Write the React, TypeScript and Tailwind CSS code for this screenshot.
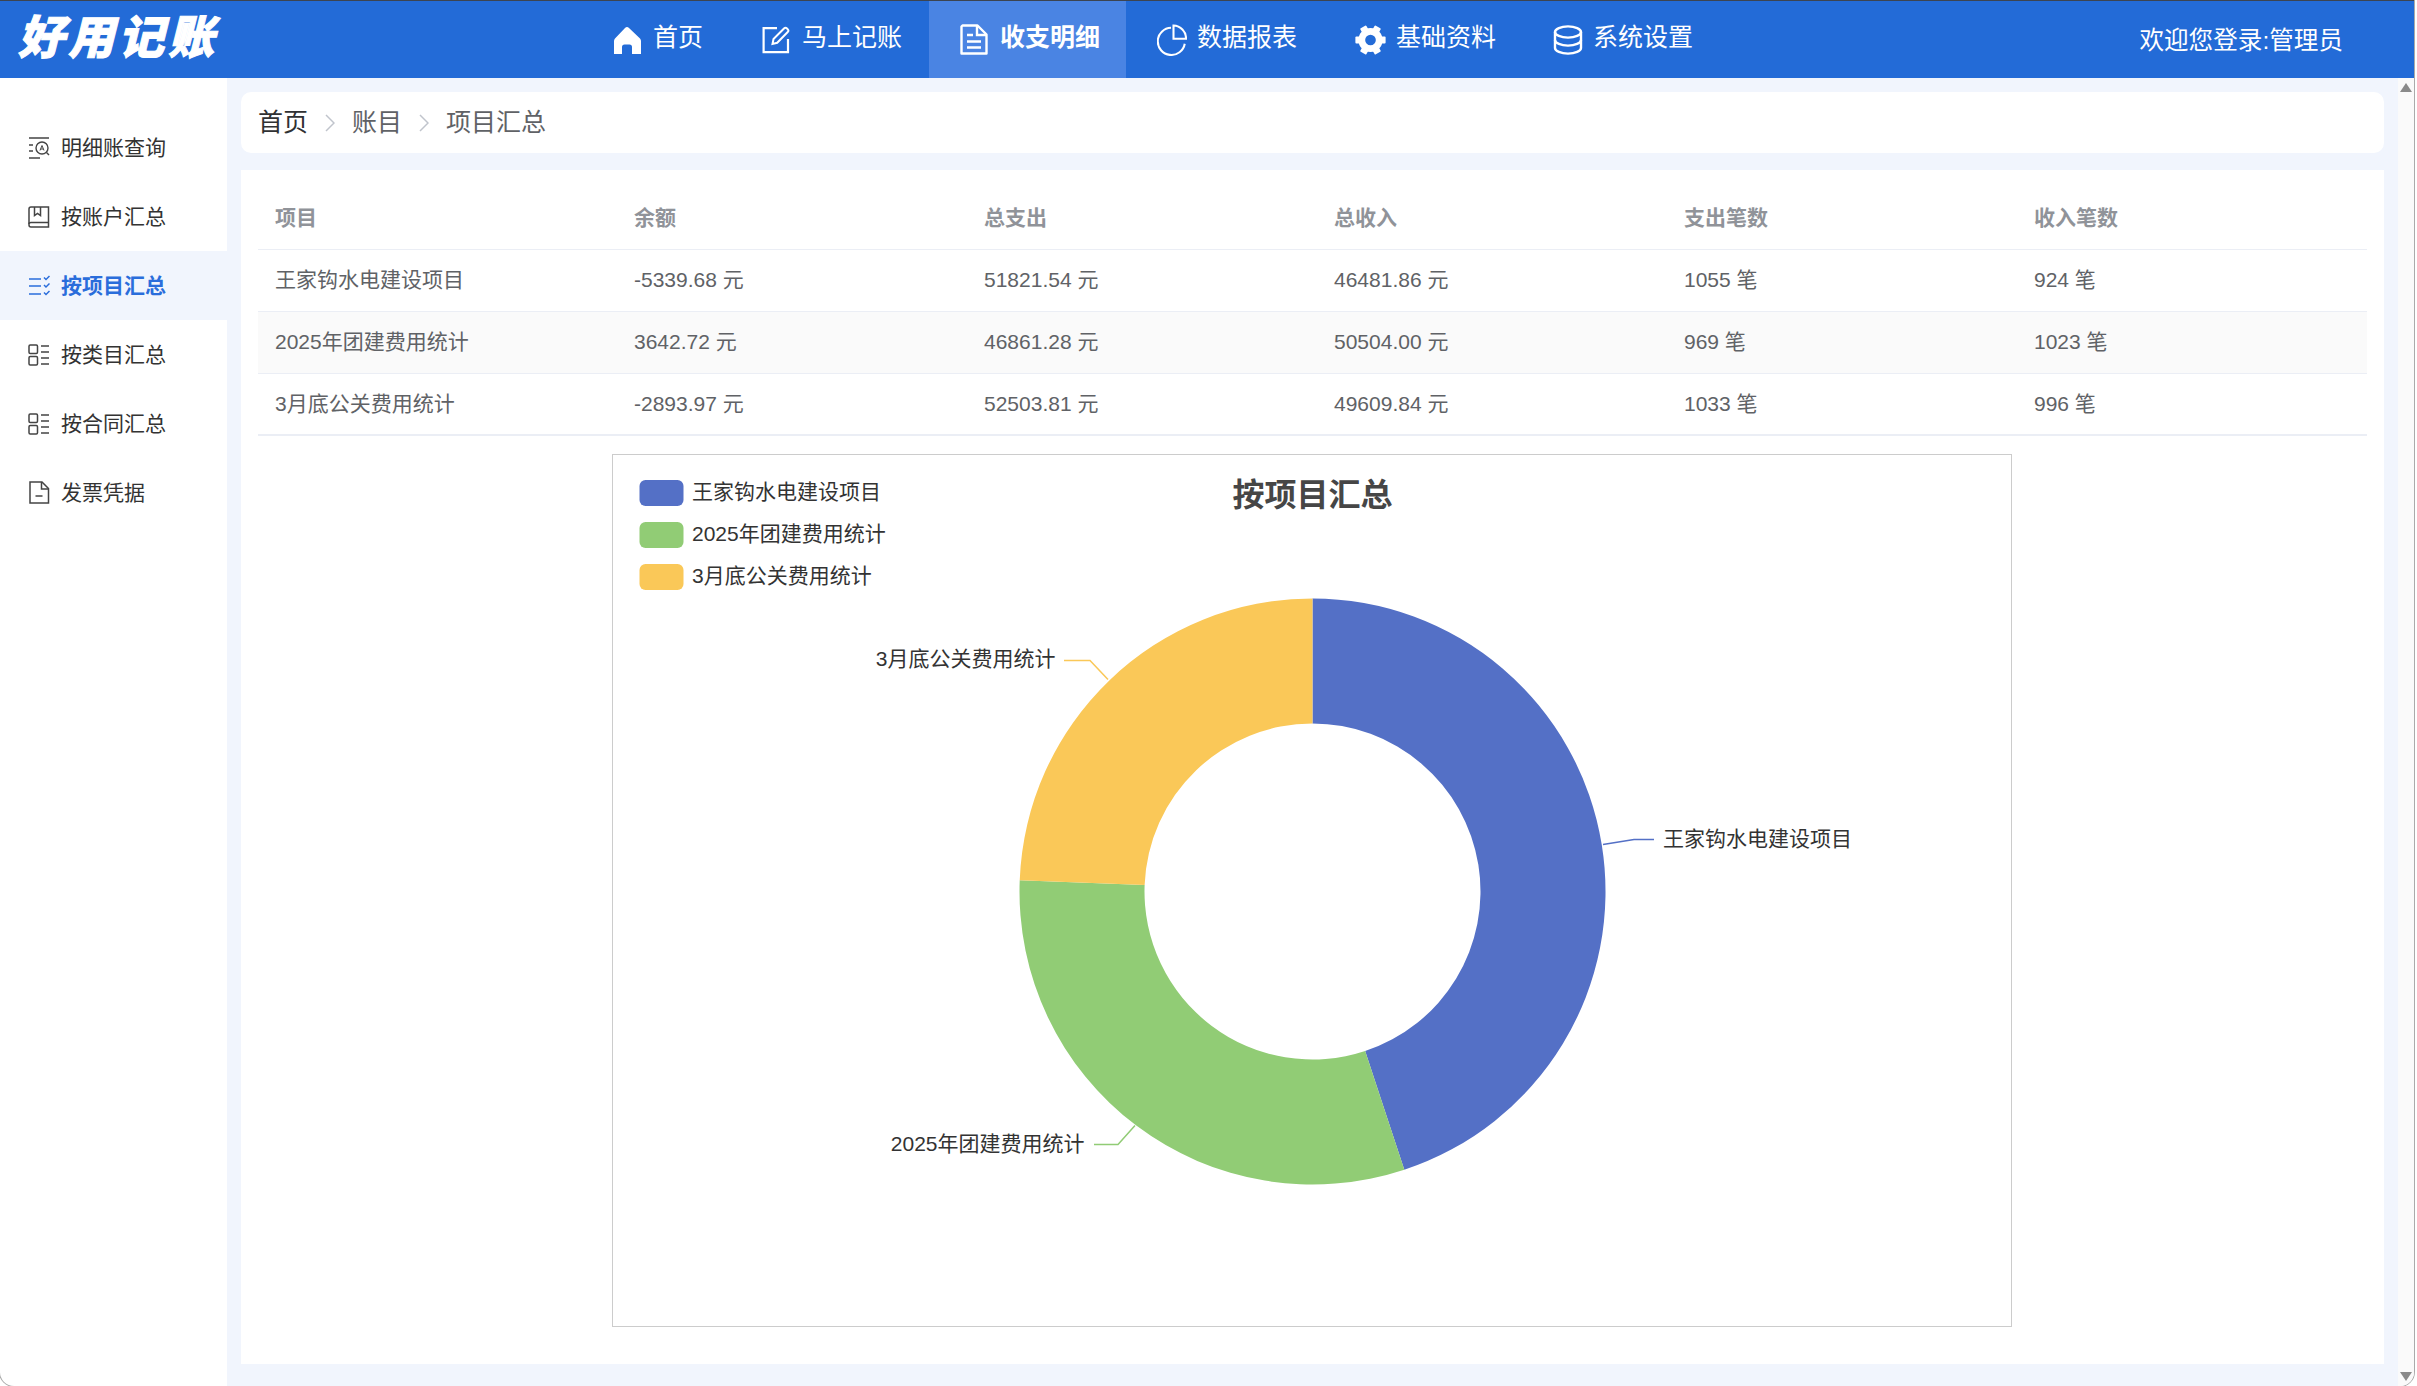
import type { ReactNode } from 'react';

const FONT = '"Liberation Sans", "Noto Sans CJK SC", sans-serif';

const CX = 699.5;
const CY = 436.5;
const R_OUT = 293;
const R_IN = 168;

// Clockwise degrees from 12 o'clock, read off the reference
const SLICES = [
  { from: 0, to: 161.74, color: '#5470c6' },
  { from: 161.74, to: 272.2, color: '#91cc75' },
  { from: 272.2, to: 360, color: '#fac858' },
];

const LEGEND = [
  { name: '王家钩水电建设项目', color: '#5470c6' },
  { name: '2025年团建费用统计', color: '#91cc75' },
  { name: '3月底公关费用统计', color: '#fac858' },
];

const ROWS = [
  ['王家钩水电建设项目', '-5339.68 元', '51821.54 元', '46481.86 元', '1055 笔', '924 笔'],
  ['2025年团建费用统计', '3642.72 元', '46861.28 元', '50504.00 元', '969 笔', '1023 笔'],
  ['3月底公关费用统计', '-2893.97 元', '52503.81 元', '49609.84 元', '1033 笔', '996 笔'],
];

const HEADS = ['项目', '余额', '总支出', '总收入', '支出笔数', '收入笔数'];

function point(deg: number, r: number) {
  const a = (deg * Math.PI) / 180;
  return `${(CX + r * Math.sin(a)).toFixed(2)} ${(CY - r * Math.cos(a)).toFixed(2)}`;
}

function arcPath(from: number, to: number) {
  const large = to - from > 180 ? 1 : 0;
  return `M${point(from, R_OUT)} A${R_OUT} ${R_OUT} 0 ${large} 1 ${point(to, R_OUT)} L${point(to, R_IN)} A${R_IN} ${R_IN} 0 ${large} 0 ${point(from, R_IN)} Z`;
}

function HomeIcon() {
  return (
    <svg width="28" height="28" viewBox="0 0 28 28" fill="#fff">
      <path d="M14 1 Q15 1 16 2 L27 12.5 Q28 13.5 28 15 V28 H19 V21 Q19 18.5 16.5 18.5 H11.5 Q9 18.5 9 21 V28 H1 V15 Q1 13.5 2 12.5 L12 2 Q13 1 14 1 Z" />
    </svg>
  );
}

function EditIcon() {
  return (
    <svg width="28" height="28" viewBox="0 0 28 28" fill="none" stroke="#fff" strokeWidth="2.2">
      <path d="M15 2.2 H1.6 V26.2 H26 V13" />
      <path d="M10.5 18 L11.5 13 L22 2.5 Q23.5 1 25 2.5 L25.8 3.3 Q27 4.8 25.7 6 L15.2 16.8 Z" strokeWidth="2" />
    </svg>
  );
}

function DocIcon() {
  return (
    <svg width="28" height="31" viewBox="0 0 28 31" fill="none" stroke="#fff" strokeWidth="2.4">
      <path d="M2.5 1.5 H17.5 L26.5 10.5 V29.5 H1.5 V2.5 Z" strokeLinejoin="round" />
      <path d="M17 2 V11 H26" />
      <path d="M7 11 H13 M7 17.5 H21 M7 23.5 H21" />
    </svg>
  );
}

function PieIcon() {
  return (
    <svg width="32" height="33" viewBox="0 0 32 33" fill="none" stroke="#fff" strokeWidth="2.2">
      <path d="M15 4 A14.5 14.5 0 1 0 29.6 21" />
      <path d="M17.6 1.6 V15.6 H31 A14 14 0 0 0 17.6 1.6 Z" />
    </svg>
  );
}

const GEAR_TEETH = [0, 60, 120, 180, 240, 300];

function GearIcon() {
  return (
    <svg width="32" height="30" viewBox="-16 -15 32 30" fill="#fff" className="-ml-[1px]">
      <circle r="9" fill="none" stroke="#fff" strokeWidth="7" />
      {GEAR_TEETH.map((deg) => (
        <rect key={deg} x="10" y="-3.6" width="5.6" height="7.2" rx="1" transform={`rotate(${deg})`} />
      ))}
    </svg>
  );
}

function DbIcon() {
  return (
    <svg width="30" height="30" viewBox="0 0 30 30" fill="none" stroke="#fff" strokeWidth="2.4">
      <ellipse cx="15" cy="7" rx="13" ry="5.6" />
      <path d="M2 7 V23 C2 26 8 28.6 15 28.6 S28 26 28 23 V7" />
      <path d="M2 15 C2 18 8 20.6 15 20.6 S28 18 28 15" />
    </svg>
  );
}

const NAV: { label: string; icon: ReactNode; active?: boolean; w: string }[] = [
  { label: '首页', icon: <HomeIcon />, w: 'w-[150px] pl-[32px]' },
  { label: '马上记账', icon: <EditIcon />, w: 'w-[198px] pl-[31px]' },
  { label: '收支明细', icon: <DocIcon />, active: true, w: 'w-[197px] pl-[31px]' },
  { label: '数据报表', icon: <PieIcon />, w: 'w-[199px] pl-[31px]' },
  { label: '基础资料', icon: <GearIcon />, w: 'w-[197px] pl-[31px]' },
  { label: '系统设置', icon: <DbIcon />, w: 'w-[197px] pl-[31px]' },
];

function IconQuery() {
  return (
    <svg width="22" height="22" viewBox="0 0 22 22" fill="none" stroke="#444" strokeWidth="1.4">
      <path d="M1 1 H21 M1 8 H5 M1 14 H5 M1 21 H12" />
      <circle cx="14" cy="11" r="6" />
      <path d="M18.5 15.5 L21 18" />
      <path d="M12 13.5 L14 8.5 L16 13.5 M12.8 12 H15.2" strokeWidth="1" />
    </svg>
  );
}

function IconBook() {
  return (
    <svg width="22" height="22" viewBox="0 0 22 22" fill="none" stroke="#444" strokeWidth="1.5">
      <path d="M3 1 H20.5 V21 H3 Q1 21 1 19 V3 Q1 1 3 1 Z" />
      <path d="M1 18 Q1 16.5 3 16.5 H20.5" />
      <path d="M6.5 1 V9.5 L9.5 7.5 L12.5 9.5 V1" />
    </svg>
  );
}

function IconCheckList() {
  return (
    <svg width="22" height="22" viewBox="0 0 22 22" fill="none" stroke="#2a6ddb" strokeWidth="1.5">
      <path d="M1 4 H13 M1 11 H13 M1 19 H13" />
      <path d="M16 2.5 L18 4.5 L21.5 1 M16 10 L18 12 L21.5 8.5 M16 17.5 L18 19.5 L21.5 16" />
    </svg>
  );
}

function IconGrid() {
  return (
    <svg width="22" height="22" viewBox="0 0 22 22" fill="none" stroke="#444" strokeWidth="1.5">
      <rect x="1" y="1" width="8.5" height="8.5" rx="1.2" />
      <rect x="1" y="12.5" width="8.5" height="8.5" rx="1.2" />
      <path d="M13 2 H21 M13 8 H21 M13 14 H21 M13 20 H21" />
    </svg>
  );
}

function IconFile() {
  return (
    <svg width="22" height="23" viewBox="0 0 22 23" fill="none" stroke="#444" strokeWidth="1.5">
      <path d="M2 1 H14 L20.5 7.5 V22 H2 Z" />
      <path d="M13.5 1 V8 H20.5" />
      <path d="M7.5 15 H14.5" />
    </svg>
  );
}

const SIDE: { label: string; icon: ReactNode; active?: boolean }[] = [
  { label: '明细账查询', icon: <IconQuery /> },
  { label: '按账户汇总', icon: <IconBook /> },
  { label: '按项目汇总', icon: <IconCheckList />, active: true },
  { label: '按类目汇总', icon: <IconGrid /> },
  { label: '按合同汇总', icon: <IconGrid /> },
  { label: '发票凭据', icon: <IconFile /> },
];

function Chevron() {
  return (
    <svg width="10" height="18" viewBox="0 0 10 18" fill="none" stroke="#c0c4cc" strokeWidth="1.5" className="mx-[17px]">
      <path d="M1 1 L9 9 L1 17" />
    </svg>
  );
}

function Chart() {
  return (
    <svg width="1398" height="871" viewBox="0 0 1398 871" style={{ fontFamily: FONT }}>
      {LEGEND.map((l, i) => (
        <g key={l.name}>
          <rect x="26.5" y={25 + i * 42} width="44" height="26" rx="6" fill={l.color} />
          <text x="79" y={43.5 + i * 42} fontSize="21" fill="#333">{l.name}</text>
        </g>
      ))}
      <text x="699.5" y="51" fontSize="32" fontWeight="700" fill="#464646" textAnchor="middle">按项目汇总</text>
      {SLICES.map((s) => (
        <path key={s.color} d={arcPath(s.from, s.to)} fill={s.color} />
      ))}
      <path d="M990 389.5 L1021 384.5 H1041" fill="none" stroke="#5470c6" strokeWidth="1.5" />
      <text x="1050" y="391" fontSize="21" fill="#333">王家钩水电建设项目</text>
      <path d="M522 670.5 L505 689.5 H481" fill="none" stroke="#91cc75" strokeWidth="1.5" />
      <text x="471.5" y="696" fontSize="21" fill="#333" textAnchor="end">2025年团建费用统计</text>
      <path d="M495 224.5 L477 205.5 H451" fill="none" stroke="#fac858" strokeWidth="1.5" />
      <text x="442.5" y="210.5" fontSize="21" fill="#333" textAnchor="end">3月底公关费用统计</text>
    </svg>
  );
}

export default function App() {
  return (
    <div className="h-[1386px] w-[2417px] overflow-hidden bg-white" style={{ fontFamily: FONT }}>
      <div className="flex h-full w-[2414px] flex-col overflow-hidden rounded-b-[14px] bg-white shadow-[0_0_0_1px_#aaaaaa]">
        <header className="flex h-[78px] shrink-0 items-stretch border-t border-[#3c4450] bg-[#236bd7] text-white">
          <div className="w-[581px] shrink-0 pl-[18px] pt-[7px] text-[46px] leading-[60px] font-black italic tracking-[4px] [-webkit-text-stroke:1px_white]">
            好用记账
          </div>
          <nav className="flex items-stretch">
            {NAV.map((item) => (
              <div
                key={item.label}
                className={`flex items-center gap-[10px] text-[25px] ${item.w} ${item.active ? 'bg-[#4a84e3] font-bold' : ''}`}
              >
                <span className="flex w-[30px] justify-start">{item.icon}</span>
                <span className="-mt-[3px]">{item.label}</span>
              </div>
            ))}
          </nav>
          <div className="ml-auto pr-[71px] pt-[25px] text-[24.6px] leading-[30px]">欢迎您登录:管理员</div>
        </header>
        <div className="flex min-h-0 flex-1">
          <aside className="w-[227px] shrink-0 pt-[35px]">
            {SIDE.map((item) => (
              <div
                key={item.label}
                className={`flex h-[69px] items-center gap-[10px] pl-[28px] text-[21px] ${item.active ? 'w-[241px] bg-[#f1f5fd] font-bold text-[#2a6ddb]' : 'text-[#333333]'}`}
              >
                <span className="w-[23px]">{item.icon}</span>
                <span>{item.label}</span>
              </div>
            ))}
          </aside>
          <main className="flex min-w-0 flex-1 flex-col gap-[17px] bg-[#f1f5fd] px-[14px] pt-[14px] pb-[22px]">
            <div className="flex h-[61px] shrink-0 items-center rounded-[10px] bg-white pl-[17px] text-[25px] text-[#606266]">
              <span className="text-[#303133]">首页</span>
              <Chevron />
              <span>账目</span>
              <Chevron />
              <span>项目汇总</span>
            </div>
            <section className="min-h-0 flex-1 bg-white px-[17px] pt-[17px]">
              <table className="w-full table-fixed border-collapse text-left text-[21px]">
                <colgroup>
                  <col className="w-[359px]" />
                  <col className="w-[350px]" />
                  <col className="w-[350px]" />
                  <col className="w-[350px]" />
                  <col className="w-[350px]" />
                  <col />
                </colgroup>
                <thead>
                  <tr className="h-[62px] border-b border-[#ebeef5] font-bold text-[#909399]">
                    {HEADS.map((h) => (
                      <th key={h} className="pl-[17px] font-bold">{h}</th>
                    ))}
                  </tr>
                </thead>
                <tbody className="text-[#606266]">
                  {ROWS.map((row, i) => (
                    <tr
                      key={row[0]}
                      className={`h-[62px] border-[#ebeef5] ${i === 2 ? 'border-b-2' : 'border-b'} ${i === 1 ? 'bg-[#fafafa]' : ''}`}
                    >
                      {row.map((cell) => (
                        <td key={cell} className="pl-[17px]">{cell}</td>
                      ))}
                    </tr>
                  ))}
                </tbody>
              </table>
              <div className="mt-[18px] ml-[354px] h-[873px] w-[1400px] border border-[#cccccc]">
                <Chart />
              </div>
            </section>
          </main>
          <div className="flex w-[16px] shrink-0 flex-col items-center justify-between bg-[#fafafa] pt-[5px] pb-[5px]">
            <svg width="12" height="9" viewBox="0 0 12 9" fill="#8a8a8a"><path d="M6 0 L12 9 H0 Z" /></svg>
            <svg width="12" height="9" viewBox="0 0 12 9" fill="#8a8a8a"><path d="M0 0 H12 L6 9 Z" /></svg>
          </div>
        </div>
      </div>
    </div>
  );
}
